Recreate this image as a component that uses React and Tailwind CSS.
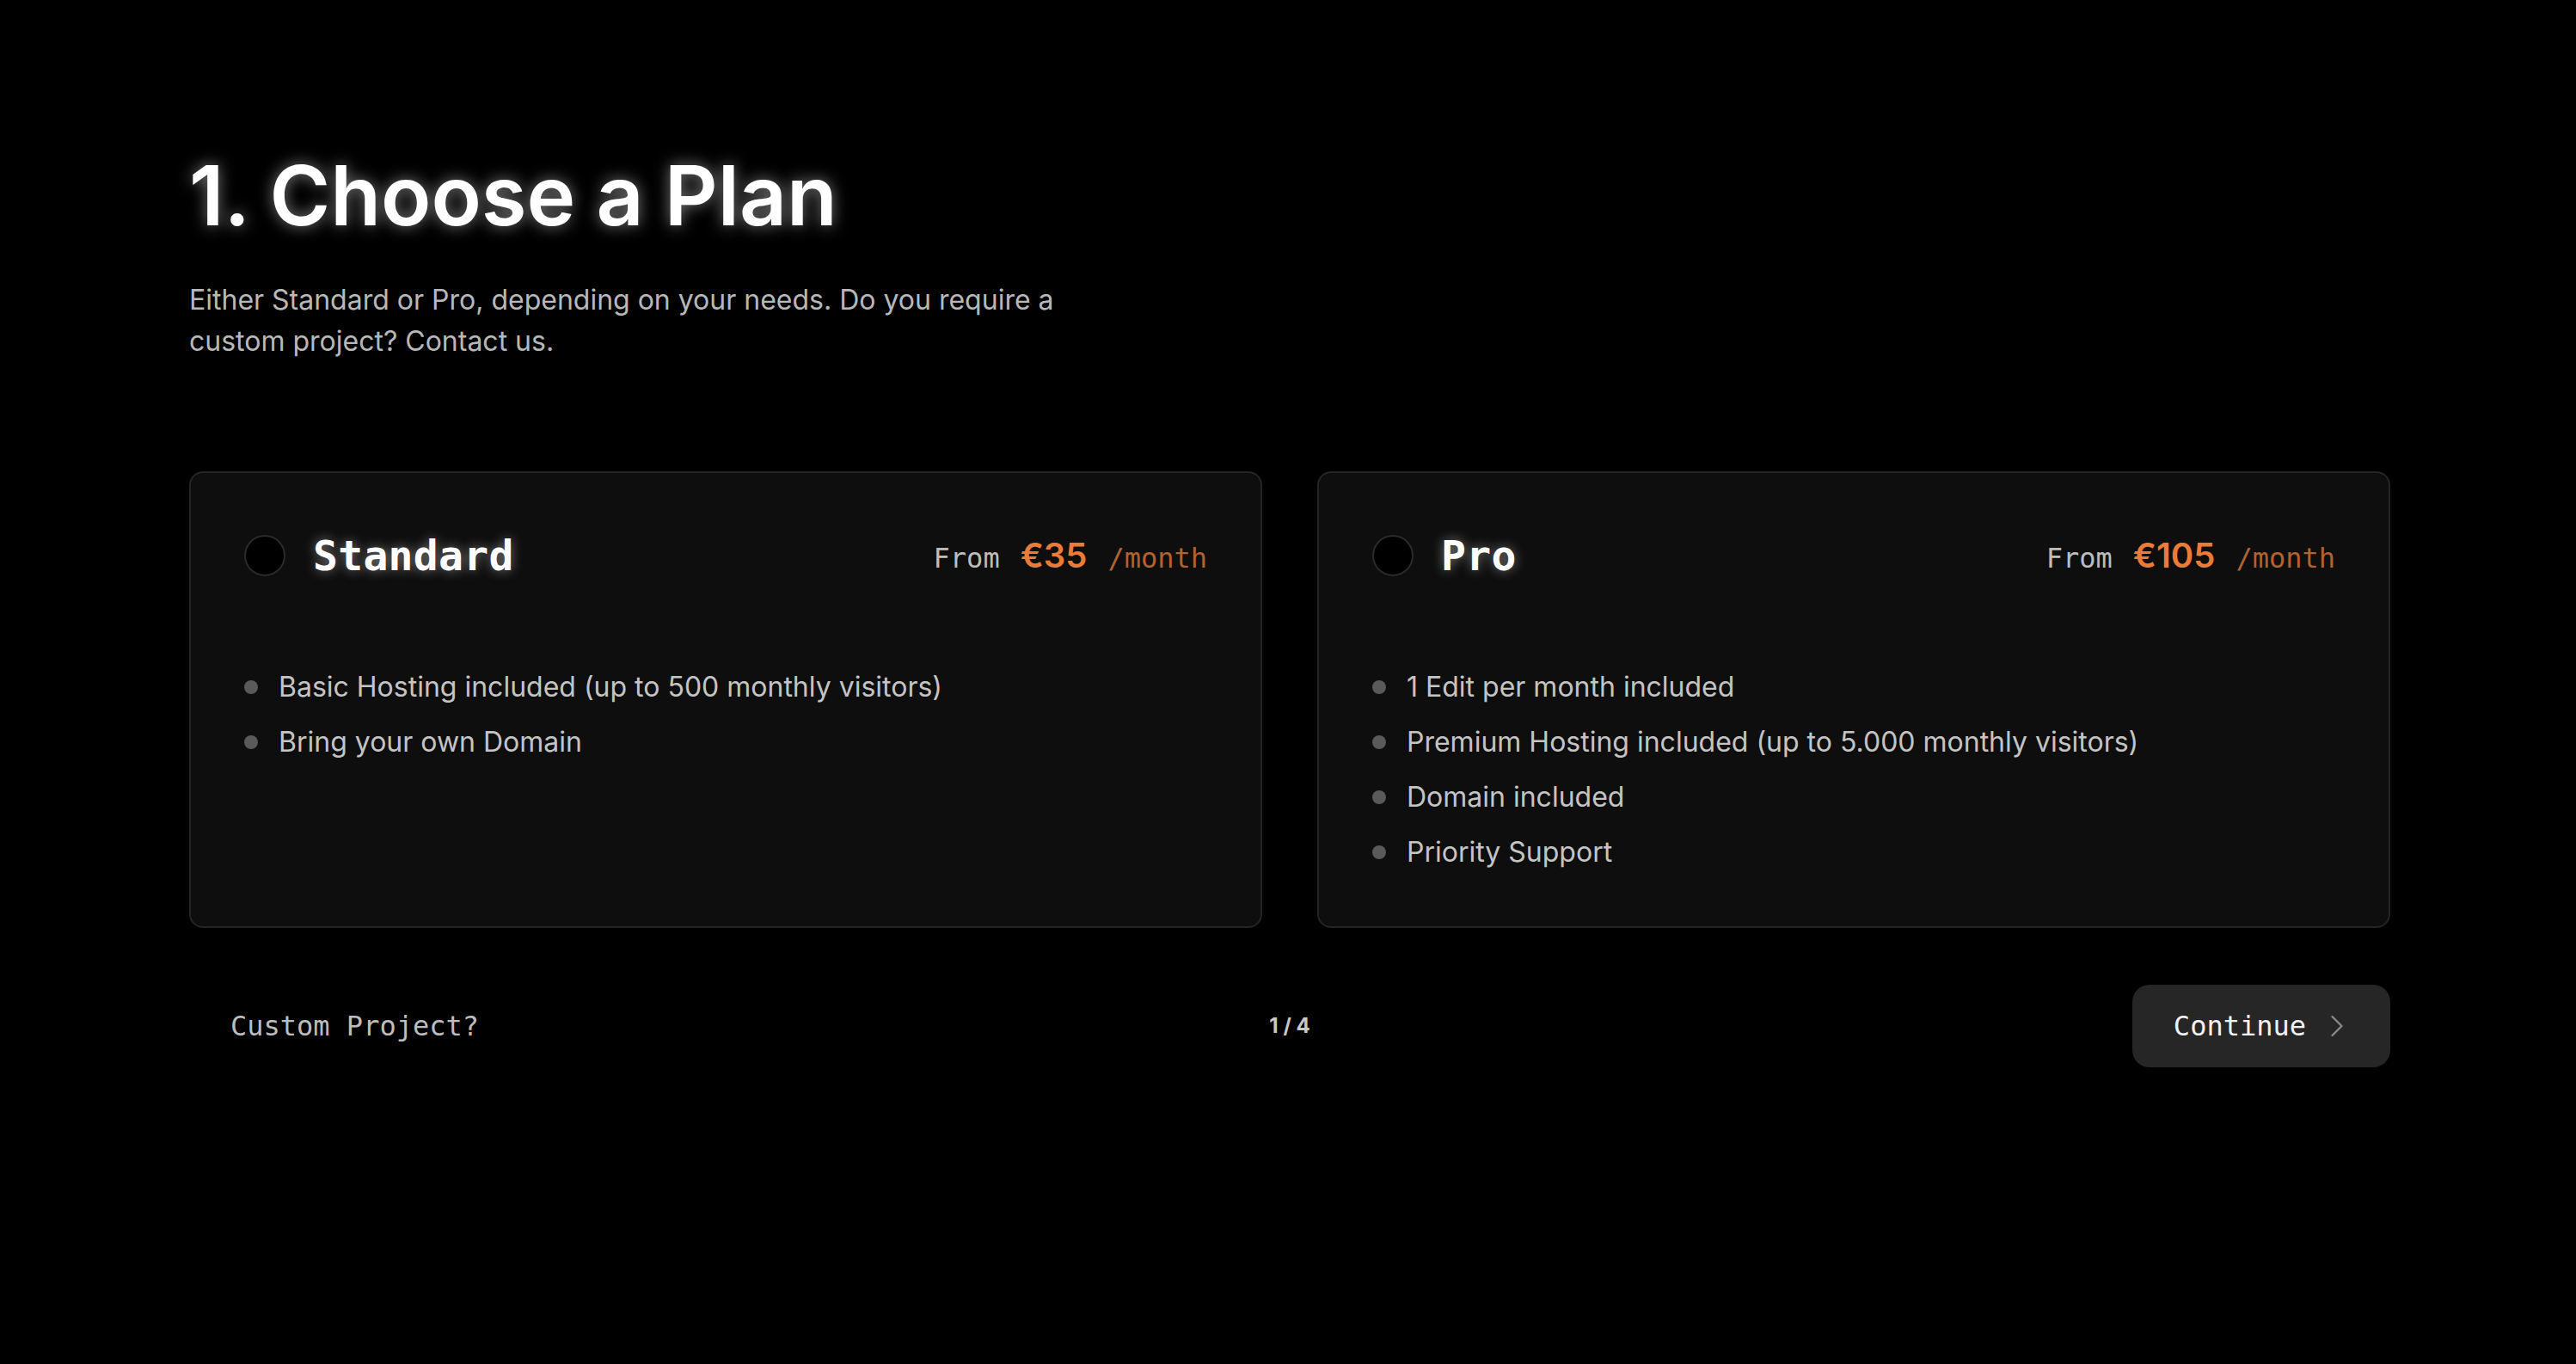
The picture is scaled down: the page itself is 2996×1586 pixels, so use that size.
import React from 'react';
import { ChevronRight } from 'lucide-react';

const plans = [
  {
    name: 'Standard',
    price: '€35',
    features: ['Basic Hosting included (up to 500 monthly visitors)', 'Bring your own Domain'],
  },
  {
    name: 'Pro',
    price: '€105',
    features: [
      '1 Edit per month included',
      'Premium Hosting included (up to 5.000 monthly visitors)',
      'Domain included',
      'Priority Support',
    ],
  },
];

const mono = "font-['DejaVu_Sans_Mono','Liberation_Mono',monospace]";

const PlanCard = ({ plan }) => (
  <div className="rounded-2xl border-2 border-[#242424] bg-[#0e0e0e] p-[62px]">
    {/* header */}
    <div className="flex h-[68px] items-center justify-between mb-[95px]">
      <div className="flex items-center gap-[32px]">
        <span className="h-12 w-12 rounded-full border-2 border-[#2a2a2a] bg-black" />
        <h3
          className={`${mono} text-[48px] font-bold leading-none tracking-[0.3px] text-white [text-shadow:0_0_14px_rgba(255,255,255,0.45)]`}
        >
          {plan.name}
        </h3>
      </div>
      <div className="flex items-baseline gap-[24px]">
        <span className={`${mono} text-[32px] text-[#bdbdbd]`}>From</span>
        <span className="font-['Inter',sans-serif] text-[40px] font-semibold text-[#ea7b38]">
          {plan.price}
        </span>
        <span className={`${mono} text-[32px] text-[#b3612f]`}>/month</span>
      </div>
    </div>

    {/* features */}
    <ul className="flex flex-col gap-4">
      {plan.features.map((f, idx) => (
        <li key={idx} className="flex items-center gap-6 text-[32px] leading-[48px] text-[#c4c4c4]">
          <span className="h-4 w-4 shrink-0 rounded-full bg-[#5a5a5a]" />
          {f}
        </li>
      ))}
    </ul>
  </div>
);

const App = () => {
  return (
    <div className="min-h-screen bg-black pl-[220px] pt-[179px] font-['Inter',sans-serif]">
      <div className="w-[2560px]">
        {/* Title */}
        <h1 className="text-[96px] font-semibold leading-none text-white [text-shadow:0_0_18px_rgba(255,255,255,0.5)]">
          1. Choose a Plan
        </h1>
        <p className="mt-[50px] max-w-[1040px] text-[32px] leading-[48px] text-[#b8b8b8]">
          Either Standard or Pro, depending on your needs. Do you require a custom project? Contact us.
        </p>

        {/* Plans */}
        <div className="mt-[127px] grid grid-cols-2 gap-16">
          {plans.map((p) => (
            <PlanCard key={p.name} plan={p} />
          ))}
        </div>

        {/* Footer */}
        <div className="mt-[66px] grid grid-cols-3 items-center">
          <button className={`${mono} justify-self-start h-24 px-12 text-[32px] text-[#bdbdbd]`}>
            Custom Project?
          </button>
          <span className="justify-self-center text-[24px] font-bold text-[#c8c8c8]">1 / 4</span>
          <button
            className={`${mono} justify-self-end flex h-24 items-center gap-[14px] rounded-[20px] bg-[#262626] pl-12 pr-10 text-[32px] text-[#f2f2f2]`}
          >
            Continue
            <ChevronRight size={44} strokeWidth={1.25} className="text-[#8a8a8a]" />
          </button>
        </div>
      </div>
    </div>
  );
};

export default App;
